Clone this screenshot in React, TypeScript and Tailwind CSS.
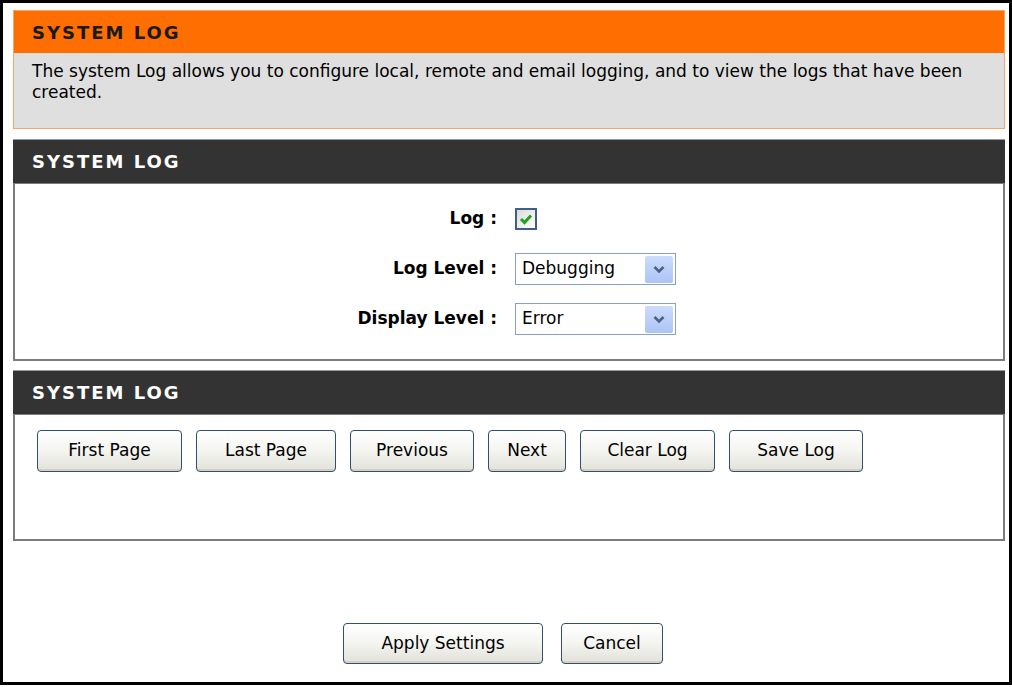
import React from 'react';

const pageFont = "font-['DejaVu_Sans',Verdana,sans-serif]";

function InfoBox() {
  return (
    <div className="border border-[#f3a867]">
      <div className="h-[42px] bg-[#ff6e00] flex items-center pl-[18px]">
        <span className="text-[18px] font-bold tracking-[2px] text-[#1a1a1a]">SYSTEM LOG</span>
      </div>
      <div className="h-[75px] bg-[#dfdfdf] pl-[18px] pr-[20px] pt-[8px] text-[17px] leading-[21px] text-black">
        The system Log allows you to configure local, remote and email logging, and to view the logs that have been
        created.
      </div>
    </div>
  );
}

function SectionHeader({ title }: { title: string }) {
  return (
    <div className="h-[44px] bg-[#333333] border-t border-[#9a9a9a] flex items-center pl-[19px]">
      <span className="text-[18px] font-bold tracking-[2px] text-white">{title}</span>
    </div>
  );
}

function CheckBox() {
  return (
    <div className="w-[22px] h-[22px] border-2 border-[#3f5f86] bg-gradient-to-br from-[#dcdcd6] to-white flex items-center justify-center">
      <svg width="14" height="12" viewBox="0 0 14 12">
        <path d="M2 6 L5.5 9.5 L12 2.5" fill="none" stroke="#21a121" strokeWidth="3" />
      </svg>
    </div>
  );
}

function Select({ value }: { value: string }) {
  return (
    <div className="w-[161px] h-[32px] border border-[#8aa2bd] bg-white flex items-center justify-between pl-[6px] pr-[2px]">
      <span className="text-[17px] text-black">{value}</span>
      <div className="w-[28px] h-[27px] rounded-[2px] bg-gradient-to-b from-[#cbdcfd] to-[#adc4f3] flex items-center justify-center">
        <svg width="12" height="9" viewBox="0 0 12 9">
          <path d="M1.5 2 L6 6.5 L10.5 2" fill="none" stroke="#4d6185" strokeWidth="2.6" />
        </svg>
      </div>
    </div>
  );
}

function Btn({ label, w, h = 'h-[42px]' }: { label: string; w: string; h?: string }) {
  return (
    <button
      className={`${w} ${h} rounded-[4px] border border-[#32506e] bg-gradient-to-b from-white via-[#f4f4f0] to-[#e2e2da] text-[17px] text-black shadow-[inset_0_-2px_0_#d6d0c4]`}
    >
      {label}
    </button>
  );
}

export default function App() {
  const rows: { label: string; control: React.ReactNode }[] = [
    { label: 'Log :', control: <CheckBox /> },
    { label: 'Log Level :', control: <Select value="Debugging" /> },
    { label: 'Display Level :', control: <Select value="Error" /> },
  ];

  return (
    <div className={`w-[1012px] h-[687px] bg-white ${pageFont}`}>
      <div className="h-[685px] border-[3px] border-black pl-[10px] pr-[4px] pt-[7px] flex flex-col">
        <InfoBox />

        {/* log settings */}
        <div className="mt-[10px]">
          <SectionHeader title="SYSTEM LOG" />
          <div className="h-[178px] border-2 border-t border-[#7c7c7c] pt-[21px] flex flex-col gap-[22px]">
            {rows.map((r) => (
              <div key={r.label} className="flex items-center h-[28px]">
                <div className="w-[482px] text-right text-[17px] font-bold text-black">{r.label}</div>
                <div className="ml-[18px]">{r.control}</div>
              </div>
            ))}
          </div>
        </div>

        {/* log viewer actions */}
        <div className="mt-[9px]">
          <SectionHeader title="SYSTEM LOG" />
          <div className="h-[127px] border-2 border-t border-[#7c7c7c] pl-[22px] pt-[15px] flex gap-[14px] items-start">
            <Btn label="First Page" w="w-[145px]" />
            <Btn label="Last Page" w="w-[140px]" />
            <Btn label="Previous" w="w-[124px]" />
            <Btn label="Next" w="w-[78px]" />
            <Btn label="Clear Log" w="w-[135px]" />
            <Btn label="Save Log" w="w-[134px]" />
          </div>
        </div>

        <div className="flex-1 flex items-end justify-center gap-[18px] pb-[18px] pr-[12px]">
          <Btn label="Apply Settings" w="w-[200px]" h="h-[41px]" />
          <Btn label="Cancel" w="w-[102px]" h="h-[41px]" />
        </div>
      </div>
    </div>
  );
}
